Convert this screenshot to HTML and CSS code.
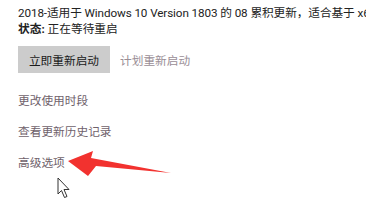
FILE: index.html
```html
<!DOCTYPE html>
<html lang="zh-CN">
<head>
    <meta charset="UTF-8">
    <title>Windows 更新</title>
    <link rel="stylesheet" href="styles.css">
</head>
<body>
    <div class="page">
        <div class="update-info">
            <p class="update-title">2018-适用于 Windows 10 Version 1803 的 08 累积更新，适合基于 x64 的系统</p>
            <p class="update-status"><b>状态:</b> 正在等待重启</p>
        </div>
        <div class="actions">
            <button class="restart-btn">立即重新启动</button>
            <a href="#" class="schedule-link">计划重新启动</a>
        </div>
        <ul class="links">
            <li><a href="#">更改使用时段</a></li>
            <li><a href="#">查看更新历史记录</a></li>
            <li><a href="#">高级选项</a></li>
        </ul>

        <!-- annotation drawn over the screenshot -->
        <svg class="overlay" width="366" height="203" viewBox="0 0 366 203">
            <polygon points="68,161 93,151 91,158 171,173 96,166 88,176" fill="#f2322f"/>
            <path d="M58,178 L58,194 L61.5,190.5 L64.5,197.5 L67,196.5 L64,189.5 L69,189.5 Z" fill="#fff" stroke="#333" stroke-width="1" stroke-linejoin="round"/>
        </svg>
    </div>
</body>
</html>
```

FILE: styles.css
```css
* {
    margin: 0;
    padding: 0;
    box-sizing: border-box;
}

body {
    background: #fff;
    font-family: Roboto, "Noto Sans CJK SC", sans-serif;
    font-size: 11.7px;
    color: #222;
    overflow: hidden;
}

.page {
    position: relative;
    width: 366px;
    height: 203px;
    padding: 5px 0 0 18px;
    overflow: hidden;
}

/* Update info */
.update-title,
.update-status {
    line-height: 16px;
    white-space: nowrap;
}

.update-title {
    letter-spacing: -0.1px;
}

.update-status b {
    font-weight: bold;
}

/* Restart buttons */
.actions {
    display: flex;
    align-items: center;
    gap: 10px;
    margin-top: 9px;
}

.restart-btn {
    width: 92px;
    height: 27px;
    border: none;
    background: #cccccc;
    color: #1a1a1a;
    font-family: inherit;
    font-size: 11.7px;
}

.schedule-link {
    color: #9a8e96;
    text-decoration: none;
}

/* Settings links */
.links {
    list-style: none;
    margin-top: 20px;
}

.links li {
    line-height: 16px;
    margin-bottom: 15px;
}

.links a {
    color: #6f626b;
    text-decoration: none;
}

.overlay {
    position: absolute;
    top: 0;
    left: 0;
}
```
